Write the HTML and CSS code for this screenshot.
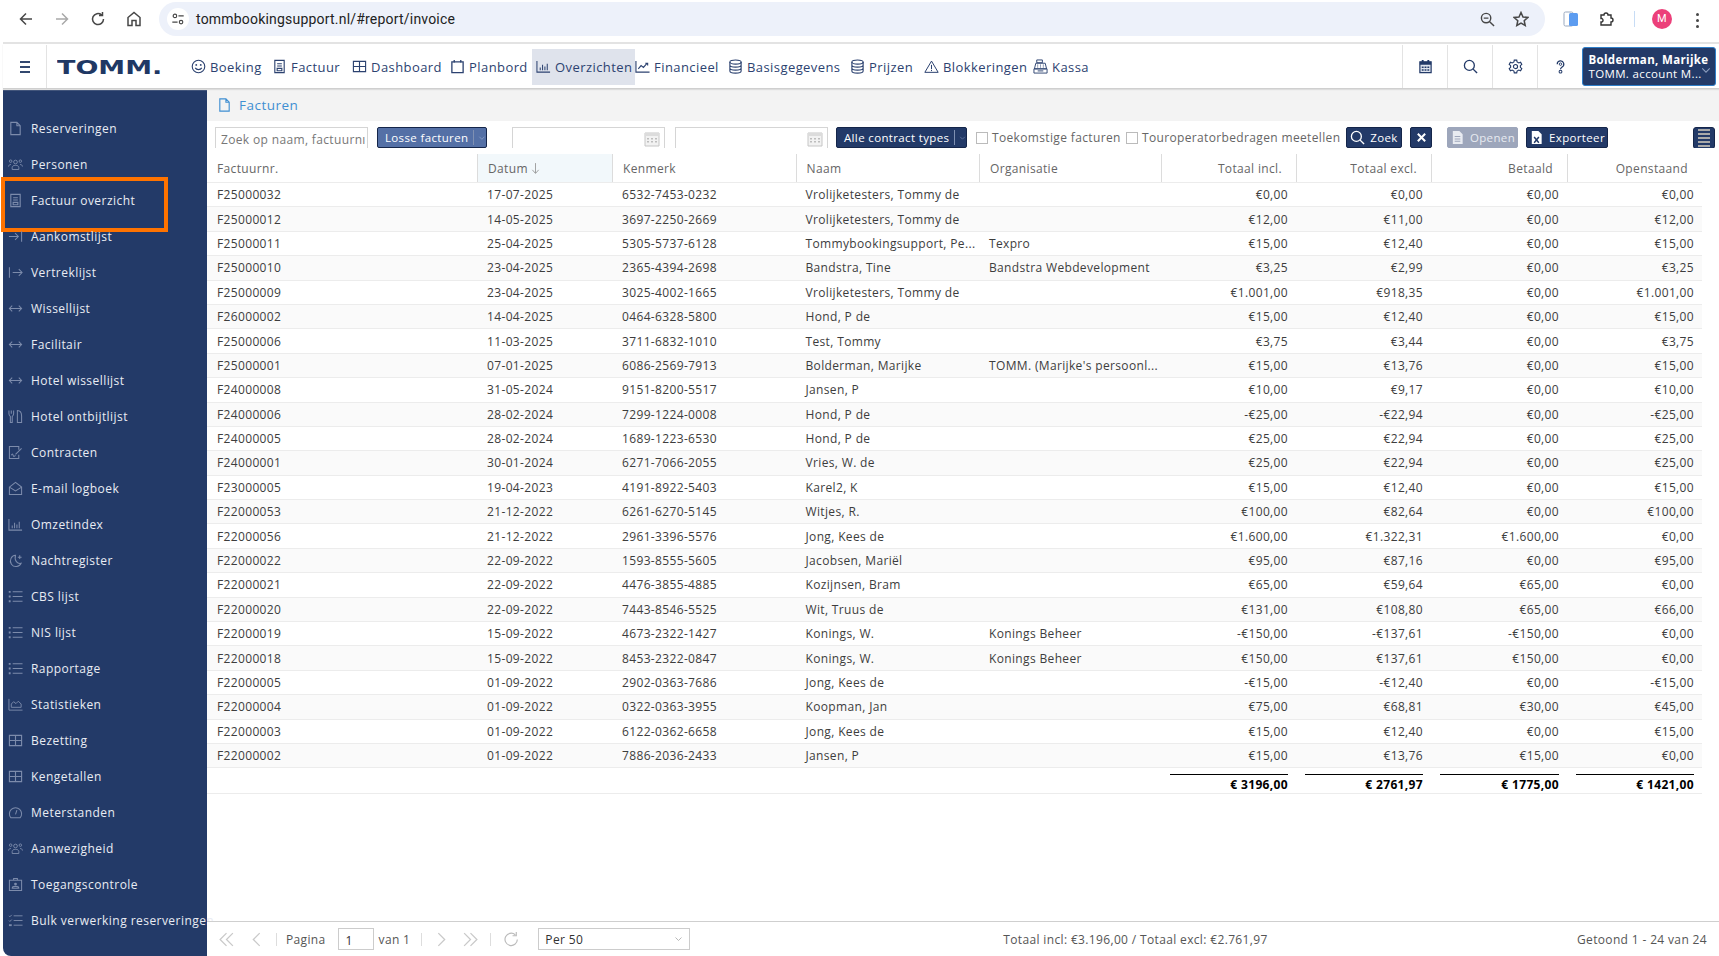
FILE: index.html
```html
<!DOCTYPE html>
<html lang="nl">
<head>
<meta charset="utf-8">
<title>Facturen</title>
<link rel="stylesheet" href="styles.css">
</head>
<body>
<svg class="defs" width="0" height="0" aria-hidden="true">
  <symbol id="i-file" viewBox="0 0 16 16"><path d="M3 1.5h6.5L13 5v9.5H3zM9.5 1.5V5H13" fill="none" stroke="currentColor" stroke-width="1.2"/></symbol>
  <symbol id="i-doc" viewBox="0 0 16 16"><path d="M3 1.5h10v13H3z M5.5 5h5M5.5 7.5h5M5.5 10h5v2.5h-5z" fill="none" stroke="currentColor" stroke-width="1.2"/></symbol>
  <symbol id="i-people" viewBox="0 0 18 16"><g fill="none" stroke="currentColor" stroke-width="1.1"><circle cx="9" cy="5" r="2.2"/><circle cx="3.2" cy="4" r="1.5"/><circle cx="14.8" cy="4" r="1.5"/><path d="M5 14v-2.5C5 10 6.500 9 9 9s4 1 4 2.500V14zM.7 10.500c0-1.500 1-2.500 2.800-2.500M17.300 10.500c0-1.500-1-2.500-2.800-2.500"/></g></symbol>
  <symbol id="i-in" viewBox="0 0 16 16"><path d="M1 8h10M7.500 4.500 11 8l-3.500 3.500M14.500 2.500v11" fill="none" stroke="currentColor" stroke-width="1.1"/></symbol>
  <symbol id="i-out" viewBox="0 0 16 16"><path d="M5 8h10M11.500 4.500 15 8l-3.500 3.500M1.500 2.500v11" fill="none" stroke="currentColor" stroke-width="1.1"/></symbol>
  <symbol id="i-swap" viewBox="0 0 16 16"><path d="M1.500 8h13M4.500 5 1.500 8l3 3M11.500 5l3 3-3 3" fill="none" stroke="currentColor" stroke-width="1.1"/></symbol>
  <symbol id="i-food" viewBox="0 0 16 16"><path d="M1 1.500v3.500c0 1.500 1 2.500 1.500 3v6.500h2V8C5 7.500 6 6.500 6 5V1.500M3.500 1.500V5M10 14.500V1.500c2.500 0 4.500 2 4.500 6v7z" fill="none" stroke="currentColor" stroke-width="1.1"/></symbol>
  <symbol id="i-sign" viewBox="0 0 16 16"><path d="M11.500 5V1.500h-10v13h10v-4M3.500 11c1-2 1.500-2 2 0s1.500 1 2.500 0M8 10l6.500-6.500" fill="none" stroke="currentColor" stroke-width="1.1"/></symbol>
  <symbol id="i-mail" viewBox="0 0 16 16"><path d="M1.500 6.500 8 1.500l6.500 5v8h-13zM1.500 6.500 8 10.500l6.500-4" fill="none" stroke="currentColor" stroke-width="1.1"/></symbol>
  <symbol id="i-bars" viewBox="0 0 16 16"><path d="M1 2v12h14M4.500 9v3M7 6v6M9.500 8v4M12 5v7" fill="none" stroke="currentColor" stroke-width="1.1"/></symbol>
  <symbol id="i-moon" viewBox="0 0 16 16"><path d="M8 2.500a6 6 0 1 0 6 8.500c-4 1-7.500-3-6-8.500zM12.500 2.500v4M10.500 4.500h4" fill="none" stroke="currentColor" stroke-width="1.1"/></symbol>
  <symbol id="i-list" viewBox="0 0 16 16"><path d="M5 3h10.500M5 8h10.500M5 13h10.500" stroke="currentColor" stroke-width="1.1"/><path d="M.8 2h2v2h-2zM.8 7h2v2h-2zM.8 12h2v2h-2z" fill="currentColor"/></symbol>
  <symbol id="i-area" viewBox="0 0 16 16"><path d="M1 2v12h14.500M3.500 11V7.500L6 5l2.500 2L11 4.500l3 3V11z" fill="none" stroke="currentColor" stroke-width="1"/></symbol>
  <symbol id="i-grid" viewBox="0 0 16 16"><path d="M1.500 2.500h13v11h-13zM1.500 8h13M8 2.500v11" fill="none" stroke="currentColor" stroke-width="1.200"/></symbol>
  <symbol id="i-gauge" viewBox="0 0 16 16"><path d="M3 13.500a6.500 6.500 0 1 1 10 0zM8 10l1.500-4.500" fill="none" stroke="currentColor" stroke-width="1.100"/></symbol>
  <symbol id="i-badge" viewBox="0 0 16 16"><path d="M1.500 3.500h13v11h-13zM6 3.500V1.500h4v2M4.500 12c0-1.500 1.500-2 3.500-2s3.500.5 3.500 2z" fill="none" stroke="currentColor" stroke-width="1.100"/><circle cx="8" cy="7.500" r="1.500" fill="currentColor"/></symbol>
  <symbol id="i-check" viewBox="0 0 16 16"><path d="M6 3h9.500M6 8h9.500M6 13h9.500M1 3l1 1 2-2M1 8l1 1 2-2" fill="none" stroke="currentColor" stroke-width="1"/><path d="M1 12h3v2H1z" fill="currentColor"/></symbol>
  <symbol id="i-smile" viewBox="0 0 16 16"><circle cx="8" cy="8" r="6.700" fill="none" stroke="currentColor" stroke-width="1.200"/><circle cx="5.600" cy="6.300" r="1" fill="currentColor"/><circle cx="10.400" cy="6.300" r="1" fill="currentColor"/><path d="M4.500 9.500c1.500 2.500 5.500 2.500 7 0" fill="none" stroke="currentColor" stroke-width="1.200"/></symbol>
  <symbol id="i-cal" viewBox="0 0 16 16"><path d="M2 3h12v11.500H2zM4.500 1v3M11.500 1v3" fill="none" stroke="currentColor" stroke-width="1.400"/></symbol>
  <symbol id="i-line" viewBox="0 0 16 16"><path d="M1 2v12h14.500M3.500 10.500l3-3.500 2.500 2 4-4.500M11 4.500h2.500V7" fill="none" stroke="currentColor" stroke-width="1.200"/></symbol>
  <symbol id="i-db" viewBox="0 0 16 16"><g fill="none" stroke="currentColor" stroke-width="1.200"><ellipse cx="8" cy="3.200" rx="6" ry="2.200"/><path d="M2 3.200v9.600c0 1.200 2.700 2.200 6 2.200s6-1 6-2.200V3.200M2 6.500c0 1.200 2.700 2.200 6 2.200s6-1 6-2.200M2 9.700c0 1.200 2.700 2.200 6 2.200s6-1 6-2.200"/></g></symbol>
  <symbol id="i-warn" viewBox="0 0 18 16"><path d="M9 1.500 17 15H1zM9 6v5M9 12v1.500" fill="none" stroke="currentColor" stroke-width="1.200"/></symbol>
  <symbol id="i-till" viewBox="0 0 16 16"><path d="M4 1h6v3H4zM3 4.500h10l1.500 6h-13zM1 10.500h14V15H1zM4.500 6.500h1M7.500 6.500h1M10.500 6.500h1M4.500 8.500h1M7.500 8.500h1M10.500 8.500h1M5 12.700h6" fill="none" stroke="currentColor" stroke-width="1"/></symbol>
  <symbol id="i-search" viewBox="0 0 16 16"><circle cx="6.800" cy="6.800" r="5.300" fill="none" stroke="currentColor" stroke-width="1.400"/><path d="m10.800 10.800 4.200 4.200" stroke="currentColor" stroke-width="1.500"/></symbol>
  <symbol id="i-datepick" viewBox="0 0 16 16"><path d="M1 2h14v13H1z" fill="#f2f2f2" stroke="#c6c6c6"/><path d="M1 2h14v3H1z" fill="#dcdcdc"/><path d="M3 7h2v1.500H3zM7 7h2v1.500H7zM11 7h2v1.500h-2zM3 10h2v1.500H3zM7 10h2v1.500H7zM11 10h2v1.500h-2z" fill="#bdbdbd"/></symbol>
</svg>

<div class="chrome">
  <button class="chrome-btn" aria-label="Terug"><svg viewBox="0 0 16 16"><path d="M14 8H2.500M8 2.500 2.500 8 8 13.500" fill="none" stroke="#474747" stroke-width="1.500"/></svg></button>
  <button class="chrome-btn" aria-label="Vooruit"><svg viewBox="0 0 16 16"><path d="M2 8h11.500M8 2.500 13.500 8 8 13.500" fill="none" stroke="#a9a9a9" stroke-width="1.500"/></svg></button>
  <button class="chrome-btn" aria-label="Herladen"><svg viewBox="0 0 16 16"><path d="M13.500 8A5.500 5.500 0 1 1 11.500 3.800M12.500 1v3.500H9" fill="none" stroke="#474747" stroke-width="1.500"/></svg></button>
  <button class="chrome-btn" aria-label="Start"><svg viewBox="0 0 16 16"><path d="M2 14.500V6.500L8 1.500l6 5v8h-4v-5H6v5z" fill="none" stroke="#474747" stroke-width="1.500"/></svg></button>
  <div class="urlbar">
    <span class="url-site"><svg viewBox="0 0 16 16"><circle cx="4.500" cy="4.500" r="2" fill="none" stroke="#474747" stroke-width="1.300"/><circle cx="11.500" cy="11.500" r="2" fill="none" stroke="#474747" stroke-width="1.300"/><path d="M8.500 4.500h6M1.500 11.500h6" stroke="#474747" stroke-width="1.300"/></svg></span>
    <span class="url-text">tommbookingsupport.nl/#report/invoice</span>
    <svg class="url-zoom" viewBox="0 0 16 16"><circle cx="6.500" cy="6.500" r="5" fill="none" stroke="#474747" stroke-width="1.500"/><path d="M4 6.500h5M10.300 10.300 15 15" stroke="#474747" stroke-width="1.500"/></svg>
    <svg class="url-star" viewBox="0 0 16 16"><path d="m8 1.500 2 4.500 4.800.5-3.600 3.200 1 4.800L8 12l-4.200 2.500 1-4.800L1.200 6.500 6 6z" fill="none" stroke="#474747" stroke-width="1.500"/></svg>
  </div>
  <svg class="ext-split" viewBox="0 0 16 16"><rect x="1" y="1" width="9" height="14" rx="1.500" fill="#fff" stroke="#9aa9bf"/><rect x="6" y="2" width="9" height="13" rx="1.500" fill="#5c9cf0"/></svg>
  <svg class="ext-puzzle" viewBox="0 0 16 16"><path d="M2 4h3a2 2 0 0 1 4 0h3v3a2 2 0 0 1 0 4v3H2v-3h1a2 2 0 0 0 0-3.500H2z" fill="none" stroke="#333" stroke-width="1.400"/></svg>
  <span class="ext-sep"></span>
  <span class="avatar">M</span>
  <span class="kebab"><i></i><i></i><i></i></span>
</div>

<div class="app">
  <header class="topbar">
    <button class="burger" aria-label="Menu"><i></i><i></i><i></i></button>
    <div class="logo"><span>TOMM.</span></div>
    <nav class="nav">
      <a class="nav-item"><svg><use href="#i-smile"/></svg>Boeking</a>
      <a class="nav-item"><svg><use href="#i-doc"/></svg>Factuur</a>
      <a class="nav-item"><svg><use href="#i-grid"/></svg>Dashboard</a>
      <a class="nav-item"><svg><use href="#i-cal"/></svg>Planbord</a>
      <a class="nav-item nav-on"><svg><use href="#i-bars"/></svg>Overzichten</a>
      <a class="nav-item"><svg><use href="#i-line"/></svg>Financieel</a>
      <a class="nav-item"><svg><use href="#i-db"/></svg>Basisgegevens</a>
      <a class="nav-item"><svg><use href="#i-db"/></svg>Prijzen</a>
      <a class="nav-item"><svg><use href="#i-warn"/></svg>Blokkeringen</a>
      <a class="nav-item"><svg><use href="#i-till"/></svg>Kassa</a>
    </nav>
    <div class="tools">
      <button class="tool" aria-label="Kalender"><svg viewBox="0 0 16 16"><path d="M2 3h12v11.500H2z" fill="#dfe4ee" stroke="#233a68" stroke-width="1.300"/><path d="M2 3h12v3H2zM4 1h2v3H4zM10 1h2v3h-2z" fill="#233a68"/><path d="M4 8h2v1.500H4zM7 8h2v1.500H7zM10 8h2v1.500h-2zM4 11h2v1.500H4zM7 11h2v1.500H7zM10 11h2v1.500h-2z" fill="#233a68"/></svg></button>
      <button class="tool" aria-label="Zoeken"><svg><use href="#i-search"/></svg></button>
      <button class="tool" aria-label="Instellingen"><svg viewBox="0 0 16 16"><circle cx="8" cy="8" r="2.200" fill="none" stroke="currentColor" stroke-width="1.200"/><path d="M6.700 1.200h2.600l.4 2 1.800 1 1.900-.7 1.300 2.300-1.500 1.300v1.800l1.500 1.300-1.300 2.300-1.900-.7-1.800 1-.4 2H6.700l-.4-2-1.800-1-1.900.7-1.300-2.300 1.500-1.300V7.100L1.300 5.800l1.300-2.300 1.900.7 1.800-1z" fill="none" stroke="currentColor" stroke-width="1.200"/></svg></button>
      <button class="tool" aria-label="Help"><svg viewBox="0 0 16 16"><path d="M4.500 5.500a3.500 3.500 0 1 1 5 3.200C8.500 9.300 8 10 8 11" fill="none" stroke="currentColor" stroke-width="1.300"/><circle cx="8" cy="5.500" r="1.300" fill="none" stroke="currentColor"/><circle cx="8" cy="13.500" r="1.500" fill="none" stroke="currentColor" stroke-width="1.100"/></svg></button>
    </div>
    <div class="userbox">
      <div class="user-text"><b>Bolderman, Marijke</b><span>TOMM. account M...</span></div>
      <svg class="user-caret" viewBox="0 0 12 8"><path d="m1.500 1.500 4.500 4.500 4.500-4.500" fill="none" stroke="#8c9dbd" stroke-width="1.300"/></svg>
    </div>
  </header>

  <div class="body">
    <aside class="sidebar">
      <a class="side-item"><svg><use href="#i-file"/></svg>Reserveringen</a>
      <a class="side-item"><svg><use href="#i-people"/></svg>Personen</a>
      <a class="side-item side-on"><svg><use href="#i-doc"/></svg>Factuur overzicht</a>
      <a class="side-item"><svg><use href="#i-in"/></svg>Aankomstlijst</a>
      <a class="side-item"><svg><use href="#i-out"/></svg>Vertreklijst</a>
      <a class="side-item"><svg><use href="#i-swap"/></svg>Wissellijst</a>
      <a class="side-item"><svg><use href="#i-swap"/></svg>Facilitair</a>
      <a class="side-item"><svg><use href="#i-swap"/></svg>Hotel wissellijst</a>
      <a class="side-item"><svg><use href="#i-food"/></svg>Hotel ontbijtlijst</a>
      <a class="side-item"><svg><use href="#i-sign"/></svg>Contracten</a>
      <a class="side-item"><svg><use href="#i-mail"/></svg>E-mail logboek</a>
      <a class="side-item"><svg><use href="#i-bars"/></svg>Omzetindex</a>
      <a class="side-item"><svg><use href="#i-moon"/></svg>Nachtregister</a>
      <a class="side-item"><svg><use href="#i-list"/></svg>CBS lijst</a>
      <a class="side-item"><svg><use href="#i-list"/></svg>NIS lijst</a>
      <a class="side-item"><svg><use href="#i-list"/></svg>Rapportage</a>
      <a class="side-item"><svg><use href="#i-area"/></svg>Statistieken</a>
      <a class="side-item"><svg><use href="#i-grid"/></svg>Bezetting</a>
      <a class="side-item"><svg><use href="#i-grid"/></svg>Kengetallen</a>
      <a class="side-item"><svg><use href="#i-gauge"/></svg>Meterstanden</a>
      <a class="side-item"><svg><use href="#i-people"/></svg>Aanwezigheid</a>
      <a class="side-item"><svg><use href="#i-badge"/></svg>Toegangscontrole</a>
      <a class="side-item"><svg><use href="#i-check"/></svg>Bulk verwerking reserveringen</a>
    </aside>

    <main class="main">
      <div class="title"><svg><use href="#i-file"/></svg>Facturen</div>
      <div class="toolbar">
        <div class="field f-search">Zoek op naam, factuurnı</div>
        <div class="select sel-light">Losse facturen<i class="sel-bar"></i><svg viewBox="0 0 12 8"><path d="m2 2 4 4 4-4" fill="none" stroke="#8fa3c9" stroke-width="1.200"/></svg></div>
        <div class="field f-date"><svg><use href="#i-datepick"/></svg></div>
        <div class="field f-date"><svg><use href="#i-datepick"/></svg></div>
        <div class="select sel-dark">Alle contract types<i class="sel-bar"></i><svg viewBox="0 0 12 8"><path d="m2 2 4 4 4-4" fill="none" stroke="#6f82a8" stroke-width="1.200"/></svg></div>
        <label class="chk chk-a"><i></i>Toekomstige facturen</label>
        <label class="chk chk-b"><i></i>Touroperatorbedragen meetellen</label>
        <button class="btn b-zoek"><svg><use href="#i-search"/></svg>Zoek</button>
        <button class="btn b-x" aria-label="Wissen"><svg viewBox="0 0 12 12"><path d="m2 2 8 8M10 2l-8 8" stroke="#fff" stroke-width="2.200"/></svg></button>
        <button class="btn b-open"><svg viewBox="0 0 16 16"><path d="M3 1h7l3.500 3.500V15H3z" fill="#e8ebf1"/><path d="M5 7h6M5 9.500h6M5 12h6" stroke="#9da6bb" stroke-width="1.100"/></svg>Openen</button>
        <button class="btn b-exp"><svg viewBox="0 0 16 16"><path d="M3 1h7l3.500 3.500V15H3z" fill="#fff"/><path d="m5.500 7.500 5 6M10.500 7.500l-5 6" stroke="#233a68" stroke-width="1.600"/></svg>Exporteer</button>
        <button class="btn b-menu" aria-label="Kolommen"><i></i><i></i><i></i><i></i><i></i></button>
      </div>

      <div class="grid">
        <div class="row head">
          <div>Factuurnr.</div>
          <div class="sorted">Datum <svg viewBox="0 0 10 14"><path d="M5 1v11M1.500 8.500 5 12.500l3.500-4" fill="none" stroke="#999" stroke-width="1"/></svg></div>
          <div>Kenmerk</div><div>Naam</div><div>Organisatie</div>
          <div class="num">Totaal incl.</div><div class="num">Totaal excl.</div><div class="num">Betaald</div><div class="num">Openstaand</div>
        </div>
        <div class="row"><div>F25000032</div><div>17-07-2025</div><div>6532-7453-0232</div><div>Vrolijketesters, Tommy de</div><div></div><div class="num">€0,00</div><div class="num">€0,00</div><div class="num">€0,00</div><div class="num">€0,00</div></div>
        <div class="row"><div>F25000012</div><div>14-05-2025</div><div>3697-2250-2669</div><div>Vrolijketesters, Tommy de</div><div></div><div class="num">€12,00</div><div class="num">€11,00</div><div class="num">€0,00</div><div class="num">€12,00</div></div>
        <div class="row"><div>F25000011</div><div>25-04-2025</div><div>5305-5737-6128</div><div>Tommybookingsupport, Pe...</div><div>Texpro</div><div class="num">€15,00</div><div class="num">€12,40</div><div class="num">€0,00</div><div class="num">€15,00</div></div>
        <div class="row"><div>F25000010</div><div>23-04-2025</div><div>2365-4394-2698</div><div>Bandstra, Tine</div><div>Bandstra Webdevelopment</div><div class="num">€3,25</div><div class="num">€2,99</div><div class="num">€0,00</div><div class="num">€3,25</div></div>
        <div class="row"><div>F25000009</div><div>23-04-2025</div><div>3025-4002-1665</div><div>Vrolijketesters, Tommy de</div><div></div><div class="num">€1.001,00</div><div class="num">€918,35</div><div class="num">€0,00</div><div class="num">€1.001,00</div></div>
        <div class="row"><div>F26000002</div><div>14-04-2025</div><div>0464-6328-5800</div><div>Hond, P de</div><div></div><div class="num">€15,00</div><div class="num">€12,40</div><div class="num">€0,00</div><div class="num">€15,00</div></div>
        <div class="row"><div>F25000006</div><div>11-03-2025</div><div>3711-6832-1010</div><div>Test, Tommy</div><div></div><div class="num">€3,75</div><div class="num">€3,44</div><div class="num">€0,00</div><div class="num">€3,75</div></div>
        <div class="row"><div>F25000001</div><div>07-01-2025</div><div>6086-2569-7913</div><div>Bolderman, Marijke</div><div>TOMM. (Marijke's persoonl...</div><div class="num">€15,00</div><div class="num">€13,76</div><div class="num">€0,00</div><div class="num">€15,00</div></div>
        <div class="row"><div>F24000008</div><div>31-05-2024</div><div>9151-8200-5517</div><div>Jansen, P</div><div></div><div class="num">€10,00</div><div class="num">€9,17</div><div class="num">€0,00</div><div class="num">€10,00</div></div>
        <div class="row"><div>F24000006</div><div>28-02-2024</div><div>7299-1224-0008</div><div>Hond, P de</div><div></div><div class="num">-€25,00</div><div class="num">-€22,94</div><div class="num">€0,00</div><div class="num">-€25,00</div></div>
        <div class="row"><div>F24000005</div><div>28-02-2024</div><div>1689-1223-6530</div><div>Hond, P de</div><div></div><div class="num">€25,00</div><div class="num">€22,94</div><div class="num">€0,00</div><div class="num">€25,00</div></div>
        <div class="row"><div>F24000001</div><div>30-01-2024</div><div>6271-7066-2055</div><div>Vries, W. de</div><div></div><div class="num">€25,00</div><div class="num">€22,94</div><div class="num">€0,00</div><div class="num">€25,00</div></div>
        <div class="row"><div>F23000005</div><div>19-04-2023</div><div>4191-8922-5403</div><div>Karel2, K</div><div></div><div class="num">€15,00</div><div class="num">€12,40</div><div class="num">€0,00</div><div class="num">€15,00</div></div>
        <div class="row"><div>F22000053</div><div>21-12-2022</div><div>6261-6270-5145</div><div>Witjes, R.</div><div></div><div class="num">€100,00</div><div class="num">€82,64</div><div class="num">€0,00</div><div class="num">€100,00</div></div>
        <div class="row"><div>F22000056</div><div>21-12-2022</div><div>2961-3396-5576</div><div>Jong, Kees de</div><div></div><div class="num">€1.600,00</div><div class="num">€1.322,31</div><div class="num">€1.600,00</div><div class="num">€0,00</div></div>
        <div class="row"><div>F22000022</div><div>22-09-2022</div><div>1593-8555-5605</div><div>Jacobsen, Mariël</div><div></div><div class="num">€95,00</div><div class="num">€87,16</div><div class="num">€0,00</div><div class="num">€95,00</div></div>
        <div class="row"><div>F22000021</div><div>22-09-2022</div><div>4476-3855-4885</div><div>Kozijnsen, Bram</div><div></div><div class="num">€65,00</div><div class="num">€59,64</div><div class="num">€65,00</div><div class="num">€0,00</div></div>
        <div class="row"><div>F22000020</div><div>22-09-2022</div><div>7443-8546-5525</div><div>Wit, Truus de</div><div></div><div class="num">€131,00</div><div class="num">€108,80</div><div class="num">€65,00</div><div class="num">€66,00</div></div>
        <div class="row"><div>F22000019</div><div>15-09-2022</div><div>4673-2322-1427</div><div>Konings, W.</div><div>Konings Beheer</div><div class="num">-€150,00</div><div class="num">-€137,61</div><div class="num">-€150,00</div><div class="num">€0,00</div></div>
        <div class="row"><div>F22000018</div><div>15-09-2022</div><div>8453-2322-0847</div><div>Konings, W.</div><div>Konings Beheer</div><div class="num">€150,00</div><div class="num">€137,61</div><div class="num">€150,00</div><div class="num">€0,00</div></div>
        <div class="row"><div>F22000005</div><div>01-09-2022</div><div>2902-0363-7686</div><div>Jong, Kees de</div><div></div><div class="num">-€15,00</div><div class="num">-€12,40</div><div class="num">€0,00</div><div class="num">-€15,00</div></div>
        <div class="row"><div>F22000004</div><div>01-09-2022</div><div>0322-0363-3955</div><div>Koopman, Jan</div><div></div><div class="num">€75,00</div><div class="num">€68,81</div><div class="num">€30,00</div><div class="num">€45,00</div></div>
        <div class="row"><div>F22000003</div><div>01-09-2022</div><div>6122-0362-6658</div><div>Jong, Kees de</div><div></div><div class="num">€15,00</div><div class="num">€12,40</div><div class="num">€0,00</div><div class="num">€15,00</div></div>
        <div class="row"><div>F22000002</div><div>01-09-2022</div><div>7886-2036-2433</div><div>Jansen, P</div><div></div><div class="num">€15,00</div><div class="num">€13,76</div><div class="num">€15,00</div><div class="num">€0,00</div></div>
        <div class="row total">
          <div></div><div></div><div></div><div></div><div></div>
          <div class="num"><b>€ 3196,00</b></div><div class="num"><b>€ 2761,97</b></div><div class="num"><b>€ 1775,00</b></div><div class="num"><b>€ 1421,00</b></div>
        </div>
      </div>

      <footer class="pager">
        <svg class="pg pg-first" viewBox="0 0 16 16"><path d="M8 2 2 8l6 6M14 2 8 8l6 6" fill="none" stroke="#c9c9c9" stroke-width="1.200"/></svg>
        <svg class="pg pg-prev" viewBox="0 0 16 16"><path d="M11 2 5 8l6 6" fill="none" stroke="#c9c9c9" stroke-width="1.200"/></svg>
        <i class="pg-sep"></i>
        <span class="pg-label">Pagina</span>
        <span class="pg-input">1</span>
        <span class="pg-of">van 1</span>
        <i class="pg-sep"></i>
        <svg class="pg pg-next" viewBox="0 0 16 16"><path d="m5 2 6 6-6 6" fill="none" stroke="#c9c9c9" stroke-width="1.200"/></svg>
        <svg class="pg pg-last" viewBox="0 0 16 16"><path d="m2 2 6 6-6 6M8 2l6 6-6 6" fill="none" stroke="#c9c9c9" stroke-width="1.200"/></svg>
        <i class="pg-sep"></i>
        <svg class="pg pg-reload" viewBox="0 0 16 16"><path d="M13.500 8A5.800 5.800 0 1 1 11.500 3.500M12.500 1v3.500H9" fill="none" stroke="#bbb" stroke-width="1.100"/></svg>
        <span class="pg-select">Per 50<svg viewBox="0 0 12 8"><path d="m2 2 4 4 4-4" fill="none" stroke="#aaa" stroke-width="1.100"/></svg></span>
        <span class="pg-sum">Totaal incl: €3.196,00 / Totaal excl: €2.761,97</span>
        <span class="pg-count">Getoond 1 - 24 van 24</span>
      </footer>
    </main>
  </div>
</div>
</body>
</html>
```
FILE: styles.css
```css
* { box-sizing: border-box; }
html, body { margin: 0; height: 100%; overflow: hidden; }
body { width: 1719px; height: 956px; background: #fff; font-family: "Open Sans", "Noto Sans", sans-serif; font-size: 12px; color: #444; letter-spacing: .35px; }
.defs { position: absolute; }
button { font: inherit; letter-spacing: inherit; border: 0; background: none; padding: 0; }

/* browser bar */
.chrome { height: 42px; padding: 2px 0 6px 8px; display: flex; align-items: stretch; border-bottom: 0; }
.chrome-btn { width: 36px; display: flex; align-items: center; justify-content: center; }
.chrome-btn svg { width: 16px; height: 16px; }
.urlbar { width: 1386px; margin-left: 7px; background: #edf1fa; border-radius: 17px; display: flex; align-items: center; padding: 0 16px 0 8px; font-family: Roboto, sans-serif; }
.url-site { width: 22px; height: 22px; border-radius: 50%; background: #fff; display: flex; align-items: center; justify-content: center; }
.url-site svg { width: 14px; height: 14px; }
.url-text { margin-left: 7px; flex: 1; font-size: 14px; letter-spacing: .2px; color: #222; }
.url-zoom { width: 15px; height: 15px; margin-right: 18px; }
.url-star { width: 16px; height: 16px; }
.ext-split { width: 16px; height: 16px; margin: 9px 0 0 18px; }
.ext-puzzle { width: 16px; height: 16px; margin: 9px 0 0 20px; }
.ext-sep { width: 1px; height: 16px; margin: 9px 0 0 19px; background: #c7dcf5; }
.avatar { width: 20px; height: 20px; margin: 7px 0 0 17px; border-radius: 50%; background: #ec407a; color: #fff; font: 11px/20px Roboto, sans-serif; text-align: center; }
.kebab { width: 4px; margin: 11px 0 0 24px; display: flex; flex-direction: column; gap: 3px; }
.kebab i { width: 3px; height: 3px; border-radius: 50%; background: #474747; }

/* app shell */
.app { margin-left: 3px; height: 914px; border-top: 2px solid #e3e3e3; display: flex; flex-direction: column; }
.topbar { height: 45px; padding-top: 1px; display: flex; border-bottom: 1px solid #cfcfcf; box-shadow: 0 1px 1px #ddd; position: relative; color: #233a68; background: #fff; }
.burger { width: 45px; display: flex; flex-direction: column; justify-content: center; align-items: center; gap: 3px; border-right: 1px solid #e3e3e3; }
.burger i { width: 10px; height: 2px; background: #33486f; }
.logo { width: 130px; padding-left: 10px; display: flex; align-items: center; }
.logo span { font: 900 19px "DejaVu Sans", sans-serif; letter-spacing: 0; color: #1f3864; transform: scaleX(1.42); transform-origin: left center; }
.nav { width: 1226px; margin-left: 15px; display: grid; grid-template-columns: 81px 80px 98px 82px 103px 93px 122px 74px 109px 60px; align-items: center; }
.nav-item { height: 36px; display: flex; align-items: center; font-size: 13px; letter-spacing: .42px; color: #2c4270; white-space: nowrap; }
.nav-item svg { width: 15px; height: 15px; margin-right: 4px; flex: none; }
.nav-on { background: #dfe3ec; padding-left: 4px; }
.tools { display: flex; margin-left: auto; }
.tool { width: 45px; border-left: 1px solid #e3e3e3; display: flex; align-items: center; justify-content: center; color: #233a68; }
.tool svg { width: 15px; height: 15px; }
.userbox { width: 135px; height: 39px; margin: 2px 3px 0 0; border: 1px solid #2f7fc9; border-radius: 3px; background: #233a68; color: #fff; padding: 2px 5px; display: flex; align-items: center; font-size: 11.500px; line-height: 14px; position: relative; }
.user-text { display: flex; flex-direction: column; white-space: nowrap; }
.user-text b { font-weight: 700; }
.user-caret { width: 10px; height: 7px; position: absolute; right: 4px; top: 19px; }

.body { flex: 1; display: flex; min-height: 0; }
.sidebar { width: 204px; background: #233a68; border-bottom-left-radius: 8px; padding-top: 21px; flex: none; }
.side-item { height: 36px; display: flex; align-items: center; padding-left: 5px; color: #e9ecf3; white-space: nowrap; font-size: 12px; letter-spacing: .45px; position: relative; }
.side-item svg { width: 15px; height: 15px; margin-right: 8px; color: #7c8bab; flex: none; }
.side-on { outline: 0; }
.side-on::after { content: ""; position: absolute; left: -2px; top: 0; width: 159px; height: 47px; margin-top: -5px; border: 4px solid #ff7300; }

.main { flex: 1; min-width: 0; display: flex; flex-direction: column; }
.title { height: 32px; background: #f3f3f3; display: flex; align-items: center; padding-left: 10px; color: #3f8fd2; font-size: 13.500px; letter-spacing: .5px; }
.title svg { width: 15px; height: 16px; margin-right: 7px; }

.toolbar { height: 27px; padding: 6px 0 0 8px; display: flex; align-items: flex-start; overflow: hidden; position: relative; }
.field { height: 26px; border: 1px solid #d5d5d5; padding: 3px 5px; color: #777; display: flex; justify-content: flex-end; overflow: hidden; white-space: nowrap; }
.f-search { width: 153px; justify-content: flex-start; }
.f-date { width: 153px; margin-left: 9px; padding: 3px 4px; border-right: 1px solid #d5d5d5; }
.f-date + .f-date { margin-left: 10px; }
.f-date svg { width: 16px; height: 16px; }
.select { height: 21px; border: 1px solid #15264a; border-radius: 2px; color: #fff; display: flex; align-items: center; padding-left: 7px; font-size: 11.500px; white-space: nowrap; position: relative; }
.select svg { width: 9px; height: 6px; margin-left: 4px; }
.sel-bar { width: 1px; height: 15px; margin-left: 5px; background: #7f90b2; }
.sel-light { width: 110px; margin: 0 16px 0 9px; background: #5470a6; }
.sel-dark { width: 131px; margin-left: 8px; background: #233a68; }
.chk { display: flex; align-items: center; height: 21px; color: #666; white-space: nowrap; }
.chk i { width: 12px; height: 12px; border: 1px solid #bbb; background: #fff; margin-right: 4px; }
.chk-a { margin-left: 9px; width: 150px; }
.chk-b { width: 220px; }
.btn { height: 21px; border: 1px solid #15264a; border-radius: 2px; background: #233a68; color: #fff; display: flex; align-items: center; justify-content: center; font-size: 11.500px; flex: none; }
.btn svg { width: 15px; height: 15px; margin-right: 5px; }
.b-zoek { width: 56px; }
.b-x { width: 22px; margin-left: 8px; }
.b-x svg { width: 11px; height: 11px; margin: 0; }
.b-open { width: 71px; margin-left: 15px; background: #9da6bb; border-color: #9da6bb; color: #e8ebf1; }
.b-exp { width: 82px; margin-left: 8px; }
.b-menu { width: 22px; margin-left: 85px; flex-direction: column; gap: 2px; height: 22px; border-radius: 3px; }
.b-menu i { width: 12px; height: 2px; background: #a9a9a9; }

.grid { flex: 1; min-height: 0; margin-top: 6px; width: 1495px; }
.row { display: grid; grid-template-columns: 270px 135px 183.500px 183.500px 182px 135px 135px 136px 135px; height: 24.400px; align-items: center; border-bottom: 1px solid #ececec; color: #3d3d3d; white-space: nowrap; }
.row > div { padding: 0 8px 0 10px; height: 100%; display: flex; align-items: center; overflow: hidden; }
.row:nth-child(odd):not(.head) { background: #fafafa; }
.row .num { justify-content: flex-end; }
.head { height: 29px; color: #666; }
.head > div { border-left: 1px solid #dcdcdc; }
.head > div:first-child { border-left: 0; }
.head .sorted { background: #f2f8fb; gap: 3px; }
.head .num { padding-right: 14px; }
.head svg { width: 9px; height: 13px; }
.total { height: 26px; border-bottom: 1px solid #ececec; background: #fff !important; color: #000; align-items: end; }
.total .num { padding: 0; margin: 6px 8px 0 9px; height: 19px; border-top: 1px solid #000; }
.total b { font-weight: 700; }

.pager { height: 35px; border-top: 1px solid #cfcfcf; display: flex; align-items: center; background: #fff; color: #555; position: relative; flex: none; }
.pg { width: 17px; height: 17px; flex: none; }
.pg-first { margin-left: 11px; }
.pg-prev { margin-left: 13px; }
.pg-sep { width: 1px; height: 13px; background: #ddd; margin: 0 9px 0 11px; flex: none; }
.pg-input { width: 36px; height: 22px; border: 1px solid #ccc; margin: 0 5px 0 12px; padding: 3px 7px; color: #333; }
.pg-next { margin-left: 2px; }
.pg-last { margin-left: 12px; }
.pg-reload { margin-left: 3px; }
.pg-select { width: 152px; height: 22px; margin-left: 18px; border: 1px solid #ccc; padding: 2px 6px; display: flex; justify-content: space-between; align-items: center; color: #333; }
.pg-select svg { width: 9px; height: 6px; }
.pg-sum { margin-left: 313px; }
.pg-count { margin-left: auto; padding-right: 12px; }
```
